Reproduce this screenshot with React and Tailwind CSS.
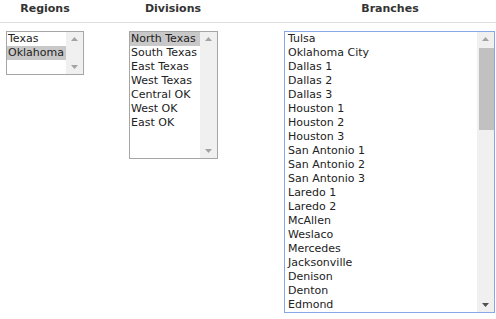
import React from "react";

const font = { fontFamily: '"DejaVu Sans", Verdana, sans-serif' };

function Arrow({ up, dark }) {
  return (
    <svg width="7" height="4" viewBox="0 0 7 4" className="block">
      {up ? (
        <polygon points="0,4 7,4 3.5,0" fill={dark ? "#505050" : "#a3a3a3"} />
      ) : (
        <polygon points="0,0 7,0 3.5,4" fill={dark ? "#505050" : "#a3a3a3"} />
      )}
    </svg>
  );
}

function ListBox({ items, selected, rows, width, focused, thumb }) {
  return (
    <div
      className={`flex border ${focused ? "border-[#86a8e6]" : "border-[#a6a6a6]"} bg-white`}
      style={{ width, height: rows * 14 + 2 }}
    >
      <div className="flex-1 overflow-hidden">
        {items.slice(0, rows).map((it) => (
          <div
            key={it}
            className={`h-[14px] ${focused ? "pl-[3px]" : "pl-[1px]"} text-[11px] leading-[14px] whitespace-nowrap text-[#222] ${
              it === selected ? "bg-[#c8c8c8]" : ""
            }`}
          >
            {it}
          </div>
        ))}
      </div>
      <div className="relative w-[17px] bg-[#f0f0f0] flex flex-col items-center justify-between py-[5px]">
        <Arrow up dark={false} />
        {thumb && (
          <div className="absolute left-[2px] right-0 top-[16px] h-[82px] bg-[#c1c1c1]" />
        )}
        <Arrow dark={focused} />
      </div>
    </div>
  );
}

const branches = [
  "Tulsa",
  "Oklahoma City",
  "Dallas 1",
  "Dallas 2",
  "Dallas 3",
  "Houston 1",
  "Houston 2",
  "Houston 3",
  "San Antonio 1",
  "San Antonio 2",
  "San Antonio 3",
  "Laredo 1",
  "Laredo 2",
  "McAllen",
  "Weslaco",
  "Mercedes",
  "Jacksonville",
  "Denison",
  "Denton",
  "Edmond",
];

export default function App() {
  return (
    <div className="w-[496px] h-[319px] bg-white text-[#222]" style={font}>
      <div className="flex h-[23px] border-b border-[#dedede] text-[11px] font-bold text-[#333] leading-[18px]">
        <div className="w-[90px] text-center">Regions</div>
        <div className="w-[166px] text-center">Divisions</div>
        <div className="ml-[28px] w-[212px] text-center">Branches</div>
      </div>
      <div className="flex items-start pt-[8px]">
        <div className="ml-[6px]">
          <ListBox items={["Texas", "Oklahoma"]} selected="Oklahoma" rows={3} width={78} />
        </div>
        <div className="ml-[45px]">
          <ListBox
            items={["North Texas", "South Texas", "East Texas", "West Texas", "Central OK", "West OK", "East OK"]}
            selected="North Texas"
            rows={9}
            width={89}
          />
        </div>
        <div className="ml-[66px]">
          <ListBox items={branches} rows={20} width={211} focused thumb />
        </div>
      </div>
    </div>
  );
}
